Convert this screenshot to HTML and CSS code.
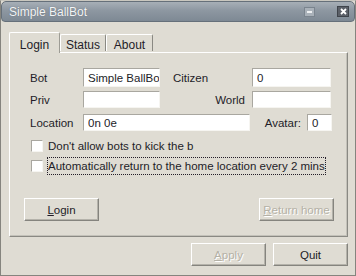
FILE: index.html
```html
<!DOCTYPE html>
<html lang="en">
<head>
    <meta charset="UTF-8">
    <meta name="viewport" content="width=device-width, initial-scale=1.0">
    <title>Simple BallBot</title>
    <link rel="stylesheet" href="styles.css">
</head>
<body>
    <div class="window">
        <div class="titlebar">
            <span class="title">Simple BallBot</span>
            <span class="tb-btn tb-min">
                <svg width="5" height="2" viewBox="0 0 5 2"><rect width="5" height="2" fill="#eef0f2"/></svg>
            </span>
            <span class="tb-btn tb-close">
                <svg width="7" height="7" viewBox="0 0 7 7"><path d="M1 1L6 6M6 1L1 6" stroke="#fff" stroke-width="1.8"/></svg>
            </span>
        </div>

        <div class="content">
            <div class="tabs">
                <div class="tab active">Login</div>
                <div class="tab">Status</div>
                <div class="tab tab-about">About</div>
            </div>

            <div class="panel">
                <div class="fields">
                    <div class="row row-1">
                        <label class="lbl">Bot</label>
                        <input class="txt txt-short" type="text" value="Simple BallBot">
                        <label class="lbl lbl-citizen">Citizen</label>
                        <input class="txt txt-right" type="text" value="0">
                    </div>
                    <div class="row row-2">
                        <label class="lbl">Priv</label>
                        <input class="txt txt-short" type="text" value="">
                        <label class="lbl lbl-world">World</label>
                        <input class="txt txt-right" type="text" value="">
                    </div>
                    <div class="row row-3">
                        <label class="lbl">Location</label>
                        <input class="txt txt-long" type="text" value="0n 0e">
                        <label class="lbl lbl-avatar">Avatar:</label>
                        <input class="txt txt-tiny" type="text" value="0">
                    </div>
                </div>

                <div class="checks">
                    <div class="check">
                        <span class="box"></span>
                        <span class="check-text check-text-1">Don't allow bots to kick the b</span>
                    </div>
                    <div class="check">
                        <span class="box"></span>
                        <span class="check-text check-text-2 focused">Automatically return to the home location every 2 mins</span>
                    </div>
                </div>

                <div class="panel-buttons">
                    <button class="btn"><u>L</u>ogin</button>
                    <button class="btn" disabled><u>R</u>eturn home</button>
                </div>
            </div>

            <div class="footer">
                <button class="btn" disabled><u>A</u>pply</button>
                <button class="btn">Quit</button>
            </div>
        </div>
    </div>
</body>
</html>
```

FILE: styles.css
```css
body {
    margin: 0;
    font-family: "Liberation Sans", Arial, sans-serif;
    font-size: 11.5px;
    color: #231d28;
    background: #dfdcd3;
}
.window {
    width: 356px;
    height: 276px;
    box-sizing: border-box;
    border: 1px solid #85847e;
    border-top-color: #c9c7bf;
    background: #dfdcd3;
}
.titlebar {
    height: 19px;
    border: 1px solid #66707a;
    border-radius: 5px 5px 4px 4px;
    background: linear-gradient(#a7afb7, #8d97a1 45%, #7e8994);
    display: flex;
    align-items: center;
    padding: 0 5px 0 7px;
}
.title {
    flex: 1;
    color: #f4f5f6;
    font-size: 12px;
    text-shadow: 0 0 1px #5d6670;
}
.tb-btn {
    width: 11px;
    height: 10px;
    display: flex;
    align-items: center;
    justify-content: center;
    box-sizing: border-box;
}
.tb-min {
    background: #a9b1b9;
    border: 1px solid #7a848e;
    margin-right: 22px;
}
.tb-close {
    width: 12px;
    height: 11px;
    background: #5b6068;
    border: 1px solid #3f444b;
}
.content {
    padding: 9px 7px 0 8px;
}
.tabs {
    display: flex;
    align-items: flex-end;
    height: 21px;
    position: relative;
    z-index: 1;
}
.tab {
    width: 46px;
    height: 17px;
    box-sizing: border-box;
    border: 1px solid #fff;
    border-right-color: #8a8983;
    border-bottom: none;
    border-radius: 2px 2px 0 0;
    padding-top: 3px;
    text-align: center;
    font-size: 12px;
    margin-bottom: 1px;
}
.tab.active {
    width: 51px;
    height: 21px;
    padding-top: 5px;
    margin-bottom: -1px;
    background: #dfdcd3;
    border-right-color: #9d9c95;
}
.tab-about {
    width: 47px;
}
.panel {
    height: 185px;
    box-sizing: border-box;
    border: 1px solid #fff;
    border-right-color: #8a8983;
    border-bottom-color: #8a8983;
    box-shadow: inset -1px -1px #c3c1b9;
}
.fields {
    padding: 15px 0 0 20px;
}
.row {
    display: flex;
    align-items: center;
}
.row-2 {
    margin-top: 4px;
}
.row-3 {
    margin-top: 6px;
}
.lbl {
    width: 53px;
    flex: none;
}
.lbl-citizen {
    width: 79px;
    margin-left: 13px;
}
.lbl-world {
    width: 85px;
    padding-right: 7px;
    text-align: right;
}
.lbl-avatar {
    width: 51px;
    padding-right: 6px;
    text-align: right;
}
.txt {
    height: 19px;
    box-sizing: border-box;
    border: 1px solid;
    border-color: #a9a7a0 #f6f5f1 #f6f5f1 #a9a7a0;
    background: #fff;
    padding: 0 0 0 4px;
    margin: 0;
    font-family: "Liberation Sans", Arial, sans-serif;
    font-size: 11.5px;
    color: #231d28;
    outline: none;
}
.row-2 .txt,
.row-3 .txt {
    height: 17px;
}
.txt-short {
    width: 77px;
}
.txt-right {
    width: 79px;
}
.txt-long {
    width: 167px;
}
.txt-tiny {
    width: 25px;
}
.checks {
    margin-top: 6px;
    padding-left: 21px;
}
.check {
    display: flex;
    align-items: center;
    height: 18px;
    margin-top: 2px;
}
.box {
    width: 12px;
    height: 12px;
    box-sizing: border-box;
    background: #fff;
    border: 1px solid;
    border-color: #a9a7a0 #f6f5f1 #f6f5f1 #a9a7a0;
    flex: none;
}
.check-text {
    margin-left: 4px;
    border: 1px dotted transparent;
    padding: 1px 0;
    white-space: nowrap;
    line-height: 14px;
}
.check-text-2 {
    width: 277px;
    overflow: hidden;
}
.focused {
    border-color: #231d28;
}
.panel-buttons {
    display: flex;
    justify-content: space-between;
    padding: 0 13px 0 14px;
    margin-top: 23px;
}
.btn {
    width: 75px;
    height: 23px;
    box-sizing: border-box;
    background: #dfdcd3;
    border: 1px solid;
    border-color: #fff #85847e #85847e #fff;
    box-shadow: inset -1px -1px #b4b2aa;
    padding: 0;
    font-family: "Liberation Sans", Arial, sans-serif;
    font-size: 11.5px;
    color: #231d28;
}
.btn:disabled {
    color: #b4b1a6;
    text-shadow: 1px 1px #fff;
}
.footer {
    display: flex;
    justify-content: flex-end;
    gap: 7px;
    margin-top: 6px;
}
```
